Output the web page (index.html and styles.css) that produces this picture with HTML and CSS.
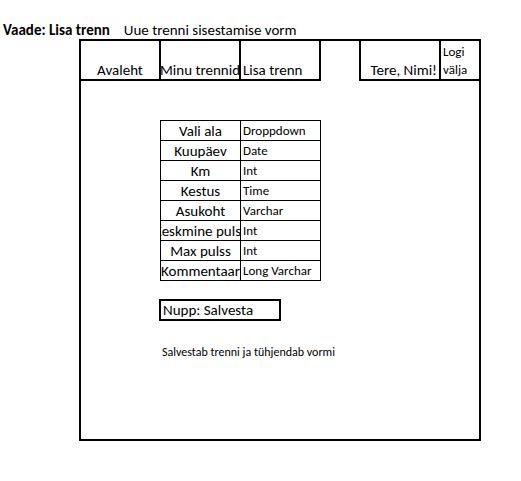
FILE: index.html
```html
<!DOCTYPE html>
<html lang="et">
<head>
<meta charset="utf-8">
<title>Lisa trenn</title>
<link rel="stylesheet" href="styles.css">
</head>
<body>
<header class="heading">
  <h1 class="view-name">Vaade: Lisa trenn</h1>
  <p class="view-note">Uue trenni sisestamise vorm</p>
</header>
<main class="frame">
  <nav class="menu">
    <a class="tab centered" href="#">Avaleht</a>
    <a class="tab centered" href="#">Minu trennid</a>
    <a class="tab" href="#">Lisa trenn</a>
    <span class="tab greeting">Tere, Nimi!</span>
    <a class="tab logout" href="#">Logi välja</a>
  </nav>
  <form class="form">
    <table class="fields">
      <tbody>
        <tr><th scope="row"><span class="name">Vali ala</span></th><td>Droppdown</td></tr>
        <tr><th scope="row"><span class="name">Kuupäev</span></th><td>Date</td></tr>
        <tr><th scope="row"><span class="name">Km</span></th><td>Int</td></tr>
        <tr><th scope="row"><span class="name">Kestus</span></th><td>Time</td></tr>
        <tr><th scope="row"><span class="name">Asukoht</span></th><td>Varchar</td></tr>
        <tr><th scope="row"><span class="name">Keskmine pulss</span></th><td>Int</td></tr>
        <tr><th scope="row"><span class="name">Max pulss</span></th><td>Int</td></tr>
        <tr><th scope="row"><span class="name">Kommentaar</span></th><td>Long Varchar</td></tr>
      </tbody>
    </table>
    <button class="save" type="button">Nupp: Salvesta</button>
    <p class="hint">Salvestab trenni ja tühjendab vormi</p>
  </form>
</main>
</body>
</html>
```

FILE: styles.css
```css
* {
  box-sizing: border-box;
}

body {
  margin: 0;
  padding: 21px 40px 40px 0;
  background: #fff;
  color: #000;
  font: 15px/18px Carlito, Lato, sans-serif;
}

.heading {
  display: flex;
  gap: 14px;
  padding-left: 3px;
}

.view-name,
.view-note {
  margin: 0;
  font-size: 15px;
  line-height: 18px;
}

.frame {
  min-height: 402px;
  margin-left: 79px;
  border: 2px solid #000;
}

.menu {
  display: grid;
  grid-template-columns: 80px 80px 80px 1fr 82px 38px;
}

.tab {
  display: flex;
  align-items: flex-end;
  height: 40px;
  padding-left: 2px;
  border: solid #000;
  border-width: 0 2px 2px 0;
  color: inherit;
  text-decoration: none;
  white-space: nowrap;
  overflow: hidden;
}

.centered {
  justify-content: center;
  padding-left: 0;
}

.greeting {
  grid-column: 5;
  justify-content: flex-end;
  padding-right: 2px;
  border-left-width: 2px;
}

.logout {
  border-right-width: 0;
  font-size: 13px;
  white-space: normal;
}

.form {
  padding: 39px 79px;
}

.fields {
  width: 161px;
  table-layout: fixed;
  border-collapse: separate;
  border-spacing: 0;
  border: solid #000;
  border-width: 1px 0 0 1px;
}

.fields th,
.fields td {
  height: 20px;
  padding: 1px 0 0;
  border: solid #000;
  border-width: 0 1px 1px 0;
  font-weight: 400;
}

.fields td {
  padding-left: 2px;
  font-size: 13px;
  white-space: nowrap;
}

.name {
  display: flex;
  justify-content: center;
  overflow: hidden;
  white-space: nowrap;
}

.save {
  display: block;
  width: 122px;
  height: 22px;
  margin: 18px 0 0 -1px;
  padding: 0 2px;
  border: 2px solid #000;
  background: #fff;
  color: inherit;
  font: inherit;
  text-align: left;
}

.hint {
  margin: 22px 0 0 2px;
  font-size: 12px;
}
```
